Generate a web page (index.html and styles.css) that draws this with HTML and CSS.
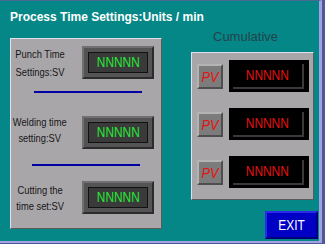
FILE: index.html
```html
<!DOCTYPE html>
<html lang="en">
<head>
    <meta charset="UTF-8">
    <meta name="viewport" content="width=device-width, initial-scale=1.0">
    <title>Process Time Settings</title>
    <link rel="stylesheet" href="styles.css">
</head>
<body>

<div class="screen">
    <div class="title">Process Time Settings:Units / min</div>

    <div class="main">
        <!-- set values -->
        <div class="settings">
            <div class="setting setting-top">
                <div class="setting-label"><span class="narrow">Punch Time<br>Settings:SV</span></div>
                <div class="sv-box"><div class="sv-value"><span class="narrow">NNNNN</span></div></div>
            </div>
            <div class="sep sep-first"></div>
            <div class="setting setting-mid">
                <div class="setting-label"><span class="narrow">Welding time<br>setting:SV</span></div>
                <div class="sv-box"><div class="sv-value"><span class="narrow">NNNNN</span></div></div>
            </div>
            <div class="sep sep-second"></div>
            <div class="setting">
                <div class="setting-label"><span class="narrow">Cutting the<br>time set:SV</span></div>
                <div class="sv-box"><div class="sv-value"><span class="narrow">NNNNN</span></div></div>
            </div>
        </div>

        <!-- cumulative values -->
        <div class="side">
            <div class="cum-title">Cumulative</div>
            <div class="cum-panel">
                <div class="pv-row">
                    <div class="pv-btn"><span class="narrow">PV</span></div>
                    <div class="pv-display"><div class="pv-value"><span class="narrow">NNNNN</span></div></div>
                </div>
                <div class="pv-row">
                    <div class="pv-btn"><span class="narrow">PV</span></div>
                    <div class="pv-display"><div class="pv-value"><span class="narrow">NNNNN</span></div></div>
                </div>
                <div class="pv-row">
                    <div class="pv-btn"><span class="narrow">PV</span></div>
                    <div class="pv-display"><div class="pv-value"><span class="narrow">NNNNN</span></div></div>
                </div>
            </div>
            <div class="exit-btn"><span class="narrow">EXIT</span></div>
        </div>
    </div>
</div>

</body>
</html>
```

FILE: styles.css
```css
body {
    margin: 0;
    padding: 0;
    background-color: #4c5a98;
    font-family: 'Liberation Sans', Arial, sans-serif;
}

/* the panel font is a narrow one, squeeze Arial to match */
.narrow {
    display: inline-block;
    white-space: nowrap;
    transform: scaleX(0.85);
}

.screen {
    width: 322px;
    height: 243px;
    box-sizing: border-box;
    background-color: #068787;
    border-top: 1px solid #4a6a94;
    border-right: 3px solid #a2a2e2;
    border-bottom: 2px solid #a2a2e2;
    padding: 8px 0 0 10px;
}

.title {
    font-size: 12px;
    font-weight: bold;
    line-height: 16px;
    color: #ffffff;
}

.main {
    display: flex;
    gap: 29px;
    margin-top: 5px;
}

.settings {
    width: 152px;
    height: 191px;
    box-sizing: border-box;
    margin-top: 8px;
    padding-top: 7px;
    background-color: #a9a6aa;
    border: 1px solid #5a5a5a;
    border-top-color: #dfe2ee;
    border-left-color: #dfe2ee;
}

.setting {
    display: flex;
    align-items: center;
    height: 33px;
}

.setting-label {
    width: 58px;
    display: flex;
    justify-content: center;
    font-size: 11px;
    line-height: 16px;
    text-align: center;
    color: #161616;
}

.setting-top .setting-label {
    line-height: 18px;
}

.setting-mid .setting-label {
    margin-top: -6px;
}

.sv-box {
    width: 72px;
    height: 33px;
    box-sizing: border-box;
    margin-left: 13px;
    padding: 4px;
    background-color: #545454;
    border: 2px solid #2c2c2c;
    border-top-color: #707070;
    border-left-color: #707070;
}

.sv-value {
    height: 100%;
    box-sizing: border-box;
    background-color: #3a3a3a;
    border: 1px solid #111111;
    color: #26e836;
    font-size: 14px;
    line-height: 19px;
    text-align: center;
}

.sep {
    width: 108px;
    height: 2px;
    margin-left: 23px;
    background-color: #0000a4;
}

.sep-first {
    margin-top: 12px;
    margin-bottom: 23px;
}

.sep-second {
    margin-left: 21px;
    margin-top: 15px;
    margin-bottom: 15px;
}

.side {
    width: 127px;
    display: flex;
    flex-direction: column;
}

.cum-title {
    font-size: 13px;
    line-height: 14px;
    padding-left: 22px;
    margin-bottom: 8px;
    color: #22444c;
}

.cum-panel {
    width: 123px;
    height: 148px;
    box-sizing: border-box;
    padding: 7px 0 0 5px;
    background-color: #a9a6aa;
    border: 1px solid #5a5a5a;
    border-top-color: #dfe2ee;
    border-left-color: #dfe2ee;
    display: flex;
    flex-direction: column;
    gap: 16px;
}

.pv-row {
    display: flex;
    align-items: center;
    height: 32px;
}

.pv-btn {
    width: 26px;
    height: 25px;
    box-sizing: border-box;
    background-color: #7c7c7c;
    border: 2px solid #4e4e4e;
    border-top-color: #b4b4b4;
    border-left-color: #b4b4b4;
    color: #e81010;
    font-size: 15px;
    font-style: italic;
    line-height: 21px;
    text-align: center;
}

.pv-display {
    width: 80px;
    height: 32px;
    box-sizing: border-box;
    margin-left: 6px;
    padding: 4px 5px 3px 4px;
    background-color: #000000;
}

.pv-value {
    height: 100%;
    box-sizing: border-box;
    border-right: 2px solid #3a3a3a;
    border-bottom: 2px solid #3a3a3a;
    color: #e41010;
    font-size: 14px;
    line-height: 22px;
    text-align: center;
}

.exit-btn {
    align-self: flex-end;
    width: 53px;
    height: 28px;
    box-sizing: border-box;
    margin-top: 11px;
    background-color: #0000c4;
    border: 2px solid #00007a;
    border-top-color: #2a2ae8;
    border-left-color: #2a2ae8;
    color: #ffffff;
    font-size: 14px;
    line-height: 24px;
    text-align: center;
}
```
